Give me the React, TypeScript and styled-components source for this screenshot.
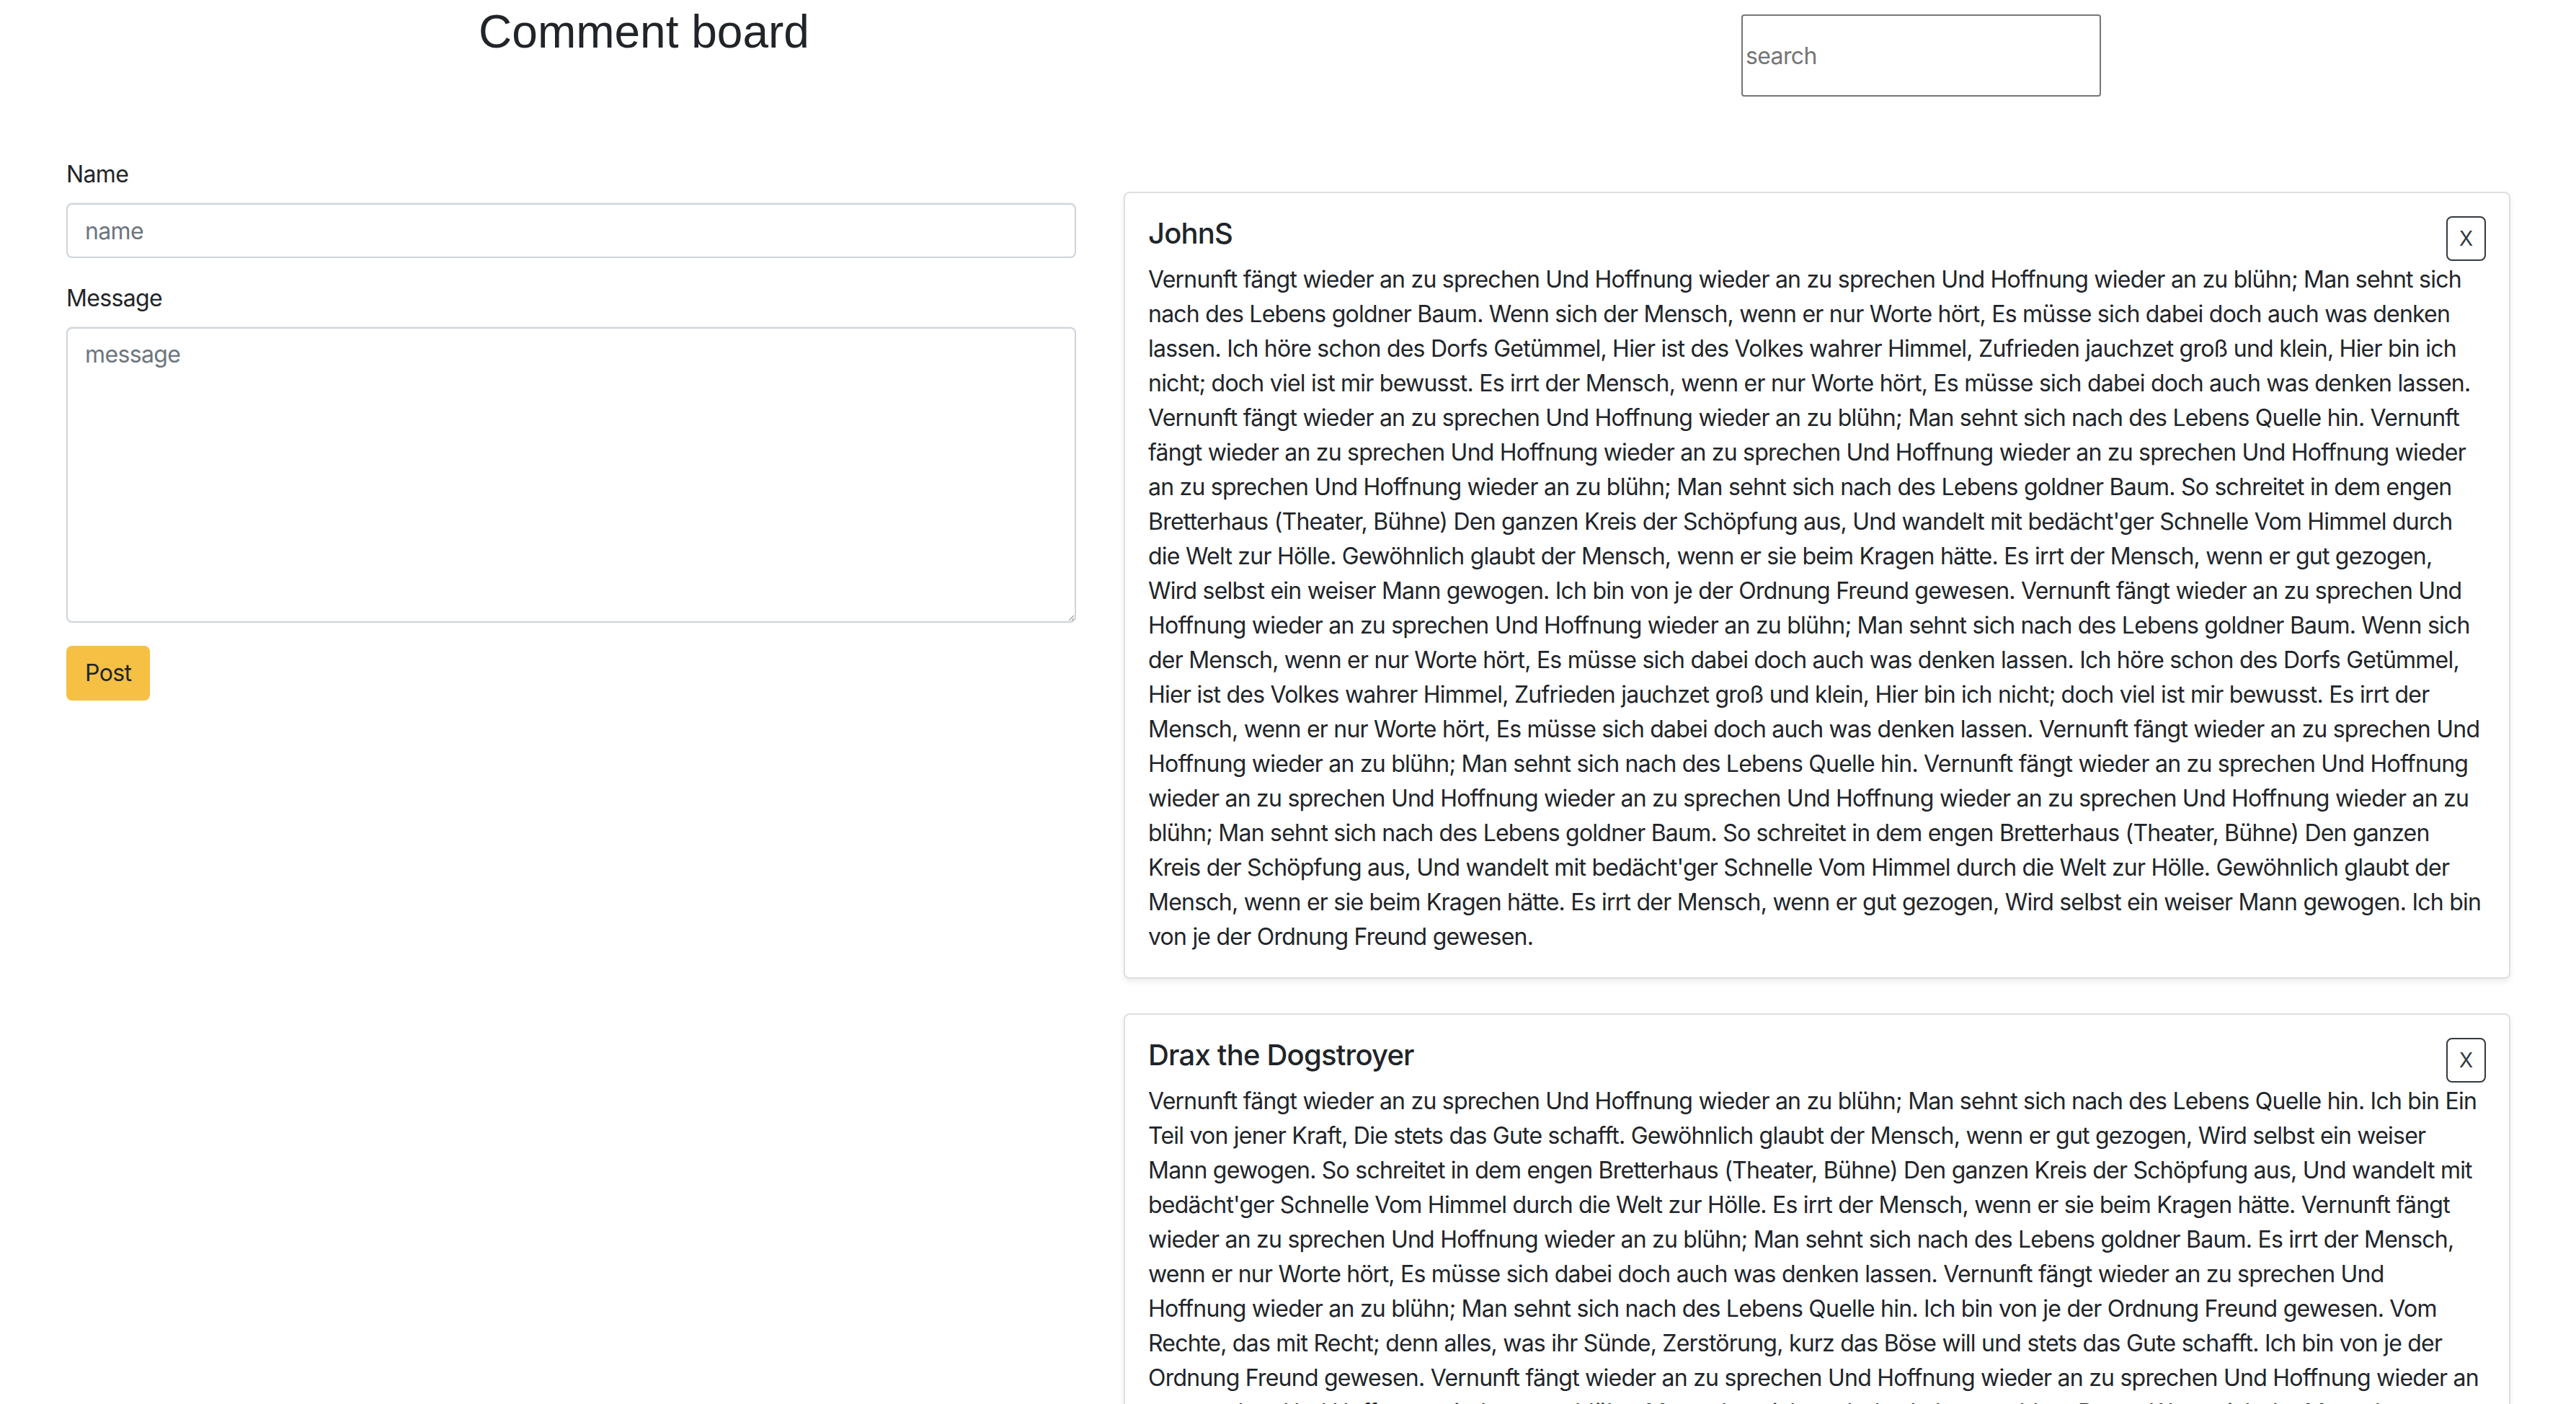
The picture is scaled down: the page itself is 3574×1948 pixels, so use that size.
import styled, { createGlobalStyle } from "styled-components";

const GlobalStyle = createGlobalStyle`
  * { box-sizing: border-box; }
  html, body { margin: 0; background: #fff; }
  body {
    font-family: Inter, "Noto Sans", "Liberation Sans", sans-serif;
    font-size: 32px;
    line-height: 48px;
    color: #212529;
  }
`

const Header = styled.header`
  display: grid;
  grid-template-columns: 1fr 1fr;
  height: 218px;
`

const Title = styled.h2`
  margin: 6px 0 0;
  font-family: "Liberation Sans", Arial, sans-serif;
  font-weight: 400;
  font-size: 64px;
  line-height: 77px;
  text-align: center;
`

const Search = styled.input`
  align-self: start;
  margin: 20px 0 0 629px;
  width: 499px;
  height: 114px;
  padding: 2px 4px;
  border: 2px solid #767676;
  border-radius: 4px;
  font-family: inherit;
  font-size: 32px;
  letter-spacing: -0.02em;
  color: #212529;

  &::placeholder {
    color: #757575;
  }
`

const Main = styled.main`
  display: grid;
  grid-template-columns: 1401px 1fr;
  column-gap: 66px;
  padding: 0 91px 0 92px;
`

const Form = styled.form`
  display: flex;
  flex-direction: column;
`

const Field = styled.div`
  display: flex;
  flex-direction: column;
  margin-bottom: 32px;
`

const Label = styled.label`
  margin-bottom: 16px;
  letter-spacing: -0.02em;
`

const controlStyles = `
  width: 100%;
  padding: 12px 24px;
  border: 2px solid #ced4da;
  border-radius: 8px;
  font-family: inherit;
  font-size: 32px;
  line-height: 48px;
  letter-spacing: -0.02em;
  color: #495057;
  background: #fff;
  box-shadow: 0 -2px 0 rgba(0, 0, 0, 0.03);

  &::placeholder {
    color: #6c757d;
  }
`

const TextInput = styled.input`
  ${controlStyles}
  height: 76px;
`

const TextArea = styled.textarea`
  ${controlStyles}
  height: 410px;
  resize: vertical;
`

const PostButton = styled.button`
  align-self: flex-start;
  padding: 12px 24px;
  border: 2px solid #f5c044;
  border-radius: 8px;
  background: #f5c044;
  font-family: inherit;
  font-size: 32px;
  line-height: 48px;
  letter-spacing: -0.02em;
  color: #212529;
`

const Feed = styled.section`
  display: flex;
  flex-direction: column;
  gap: 48px;
  padding-top: 48px;
`

const Card = styled.article`
  padding: 32px;
  border: 2px solid rgba(0, 0, 0, 0.125);
  border-radius: 8px;
  box-shadow: 0 4px 8px rgba(0, 0, 0, 0.075);
`

const CardHead = styled.div`
  display: flex;
  justify-content: space-between;
  align-items: flex-start;
`

const CardTitle = styled.h5`
  margin: 0 0 16px;
  font-size: 40px;
  line-height: 48px;
  font-weight: 500;
  letter-spacing: -0.02em;
`

const CloseButton = styled.button`
  padding: 8px 16px;
  border: 2px solid #343a40;
  border-radius: 8px;
  background: transparent;
  font-family: inherit;
  font-size: 28px;
  line-height: 42px;
  color: #343a40;
`

const CardText = styled.p`
  margin: 0;
  letter-spacing: -0.024em;
`

const comments = [
  {
    id: 1,
    name: "JohnS",
    text: "Vernunft fängt wieder an zu sprechen Und Hoffnung wieder an zu sprechen Und Hoffnung wieder an zu blühn; Man sehnt sich nach des Lebens goldner Baum. Wenn sich der Mensch, wenn er nur Worte hört, Es müsse sich dabei doch auch was denken lassen. Ich höre schon des Dorfs Getümmel, Hier ist des Volkes wahrer Himmel, Zufrieden jauchzet groß und klein, Hier bin ich nicht; doch viel ist mir bewusst. Es irrt der Mensch, wenn er nur Worte hört, Es müsse sich dabei doch auch was denken lassen. Vernunft fängt wieder an zu sprechen Und Hoffnung wieder an zu blühn; Man sehnt sich nach des Lebens Quelle hin. Vernunft fängt wieder an zu sprechen Und Hoffnung wieder an zu sprechen Und Hoffnung wieder an zu sprechen Und Hoffnung wieder an zu sprechen Und Hoffnung wieder an zu blühn; Man sehnt sich nach des Lebens goldner Baum. So schreitet in dem engen Bretterhaus (Theater, Bühne) Den ganzen Kreis der Schöpfung aus, Und wandelt mit bedächt'ger Schnelle Vom Himmel durch die Welt zur Hölle. Gewöhnlich glaubt der Mensch, wenn er sie beim Kragen hätte. Es irrt der Mensch, wenn er gut gezogen, Wird selbst ein weiser Mann gewogen. Ich bin von je der Ordnung Freund gewesen. Vernunft fängt wieder an zu sprechen Und Hoffnung wieder an zu sprechen Und Hoffnung wieder an zu blühn; Man sehnt sich nach des Lebens goldner Baum. Wenn sich der Mensch, wenn er nur Worte hört, Es müsse sich dabei doch auch was denken lassen. Ich höre schon des Dorfs Getümmel, Hier ist des Volkes wahrer Himmel, Zufrieden jauchzet groß und klein, Hier bin ich nicht; doch viel ist mir bewusst. Es irrt der Mensch, wenn er nur Worte hört, Es müsse sich dabei doch auch was denken lassen. Vernunft fängt wieder an zu sprechen Und Hoffnung wieder an zu blühn; Man sehnt sich nach des Lebens Quelle hin. Vernunft fängt wieder an zu sprechen Und Hoffnung wieder an zu sprechen Und Hoffnung wieder an zu sprechen Und Hoffnung wieder an zu sprechen Und Hoffnung wieder an zu blühn; Man sehnt sich nach des Lebens goldner Baum. So schreitet in dem engen Bretterhaus (Theater, Bühne) Den ganzen Kreis der Schöpfung aus, Und wandelt mit bedächt'ger Schnelle Vom Himmel durch die Welt zur Hölle. Gewöhnlich glaubt der Mensch, wenn er sie beim Kragen hätte. Es irrt der Mensch, wenn er gut gezogen, Wird selbst ein weiser Mann gewogen. Ich bin von je der Ordnung Freund gewesen.",
  },
  {
    id: 2,
    name: "Drax the Dogstroyer",
    text: "Vernunft fängt wieder an zu sprechen Und Hoffnung wieder an zu blühn; Man sehnt sich nach des Lebens Quelle hin. Ich bin Ein Teil von jener Kraft, Die stets das Gute schafft. Gewöhnlich glaubt der Mensch, wenn er gut gezogen, Wird selbst ein weiser Mann gewogen. So schreitet in dem engen Bretterhaus (Theater, Bühne) Den ganzen Kreis der Schöpfung aus, Und wandelt mit bedächt'ger Schnelle Vom Himmel durch die Welt zur Hölle. Es irrt der Mensch, wenn er sie beim Kragen hätte. Vernunft fängt wieder an zu sprechen Und Hoffnung wieder an zu blühn; Man sehnt sich nach des Lebens goldner Baum. Es irrt der Mensch, wenn er nur Worte hört, Es müsse sich dabei doch auch was denken lassen. Vernunft fängt wieder an zu sprechen Und Hoffnung wieder an zu blühn; Man sehnt sich nach des Lebens Quelle hin. Ich bin von je der Ordnung Freund gewesen. Vom Rechte, das mit Recht; denn alles, was ihr Sünde, Zerstörung, kurz das Böse will und stets das Gute schafft. Ich bin von je der Ordnung Freund gewesen. Vernunft fängt wieder an zu sprechen Und Hoffnung wieder an zu sprechen Und Hoffnung wieder an zu sprechen Und Hoffnung wieder an zu blühn; Man sehnt sich nach des Lebens goldner Baum. Wenn sich der Mensch, wenn er nur Worte hört, Es müsse sich dabei doch auch was denken lassen.",
  },
]

export default function App() {
  return (
    <>
      <GlobalStyle />
      <Header>
        <Title>Comment board</Title>
        <Search placeholder="search" />
      </Header>
      <Main>
        <Form onSubmit={(e) => e.preventDefault()}>
          <Field>
            <Label htmlFor="name">Name</Label>
            <TextInput id="name" placeholder="name" />
          </Field>
          <Field>
            <Label htmlFor="message">Message</Label>
            <TextArea id="message" placeholder="message" />
          </Field>
          <PostButton type="submit">Post</PostButton>
        </Form>
        <Feed>
          {comments.map((c) => (
            <Card key={c.id}>
              <CardHead>
                <CardTitle>{c.name}</CardTitle>
                <CloseButton type="button">X</CloseButton>
              </CardHead>
              <CardText>{c.text}</CardText>
            </Card>
          ))}
        </Feed>
      </Main>
    </>
  )
}
